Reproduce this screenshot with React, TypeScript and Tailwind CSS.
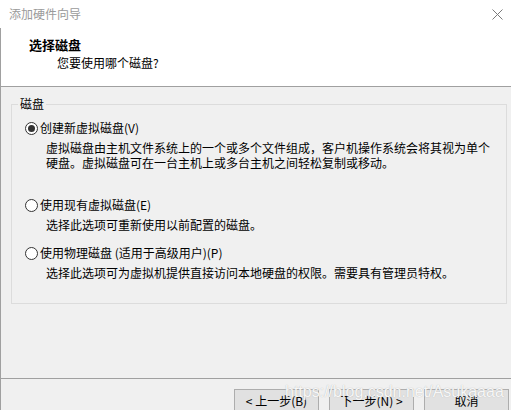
import React from "react";

function Radio({ checked }: { checked?: boolean }) {
  return (
    <span className="w-[13px] h-[13px] rounded-full border border-[#333333] bg-white flex items-center justify-center shrink-0">
      {checked ? <span className="w-[7px] h-[7px] rounded-full bg-[#333333]" /> : null}
    </span>
  );
}

export default function App() {
  return (
    <div className="w-[511px] h-[410px] bg-[#f0f0f0] overflow-hidden relative flex flex-col font-['Noto_Sans_CJK_SC','Microsoft_YaHei',sans-serif] text-[12px] text-black">
      {/* title bar */}
      <div className="h-[28px] bg-white flex items-center justify-between pl-[9px] pr-[4px] shrink-0">
        <span className="text-[#9a9a9a] text-[12px] leading-[16px]">添加硬件向导</span>
        <svg width="11" height="11" viewBox="0 0 11 11" className="mr-[4px]">
          <path d="M0.5 0.5 L10.5 10.5 M10.5 0.5 L0.5 10.5" stroke="#7a7a7a" strokeWidth="1" fill="none" />
        </svg>
      </div>
      <div className="flex-1 flex flex-col border-l border-[#a0a0a0]">
        {/* header */}
        <div className="h-[59px] bg-white border-b border-[#a0a0a0] pl-[28px] pt-[9px] shrink-0">
          <div className="font-bold text-[13px] leading-[16px]">选择磁盘</div>
          <div className="mt-[2px] pl-[28px] leading-[16px]">您要使用哪个磁盘?</div>
        </div>
        {/* body */}
        <div className="flex-1 pl-[10px] pt-[9px]">
          <fieldset className="w-[496px] border border-[#dcdcdc] pb-[23px]">
            <legend className="ml-[6px] px-[2px] leading-[16px]">磁盘</legend>
            <div className="mt-[8px] pl-[13px] flex items-center gap-[2px] h-[16px]">
              <Radio checked />
              <span className="leading-[16px]">创建新虚拟磁盘(V)</span>
            </div>
            <div className="mt-[4px] pl-[34px] leading-[15px] whitespace-nowrap">
              <div>虚拟磁盘由主机文件系统上的一个或多个文件组成，客户机操作系统会将其视为单个</div>
              <div>硬盘。虚拟磁盘可在一台主机上或多台主机之间轻松复制或移动。</div>
            </div>
            <div className="mt-[27px] pl-[13px] flex items-center gap-[2px] h-[16px]">
              <Radio />
              <span className="leading-[16px]">使用现有虚拟磁盘(E)</span>
            </div>
            <div className="mt-[4px] pl-[34px] leading-[15px] whitespace-nowrap">
              选择此选项可重新使用以前配置的磁盘。
            </div>
            <div className="mt-[13px] pl-[13px] flex items-center gap-[2px] h-[16px]">
              <Radio />
              <span className="leading-[16px]">使用物理磁盘 (适用于高级用户)(P)</span>
            </div>
            <div className="mt-[4px] pl-[34px] leading-[15px] whitespace-nowrap">
              选择此选项可为虚拟机提供直接访问本地硬盘的权限。需要具有管理员特权。
            </div>
          </fieldset>
        </div>
        {/* footer */}
        <div className="h-[32px] border-t border-[#a0a0a0] pt-[10px] pr-[2px] flex justify-end gap-[10px] shrink-0">
          <button className="w-[85px] h-[23px] border border-[#adadad] bg-[#e1e1e1] flex items-center justify-center leading-[16px]">
            &lt; 上一步(B)
          </button>
          <button className="w-[85px] h-[23px] border border-[#adadad] bg-[#e1e1e1] flex items-center justify-center leading-[16px]">
            下一步(N) &gt;
          </button>
          <button className="w-[85px] h-[23px] border border-[#adadad] bg-[#e1e1e1] flex items-center justify-center leading-[16px]">
            取消
          </button>
        </div>
      </div>
      {/* watermark */}
      <div className="absolute left-[285px] top-[384px] font-['Liberation_Sans',Arial,sans-serif] text-[16px] leading-[16px] text-white/90 [text-shadow:0_0_1px_#a8a8a8] whitespace-nowrap pointer-events-none">
        https://blog.csdn.net/Asukaaaa
      </div>
    </div>
  );
}
